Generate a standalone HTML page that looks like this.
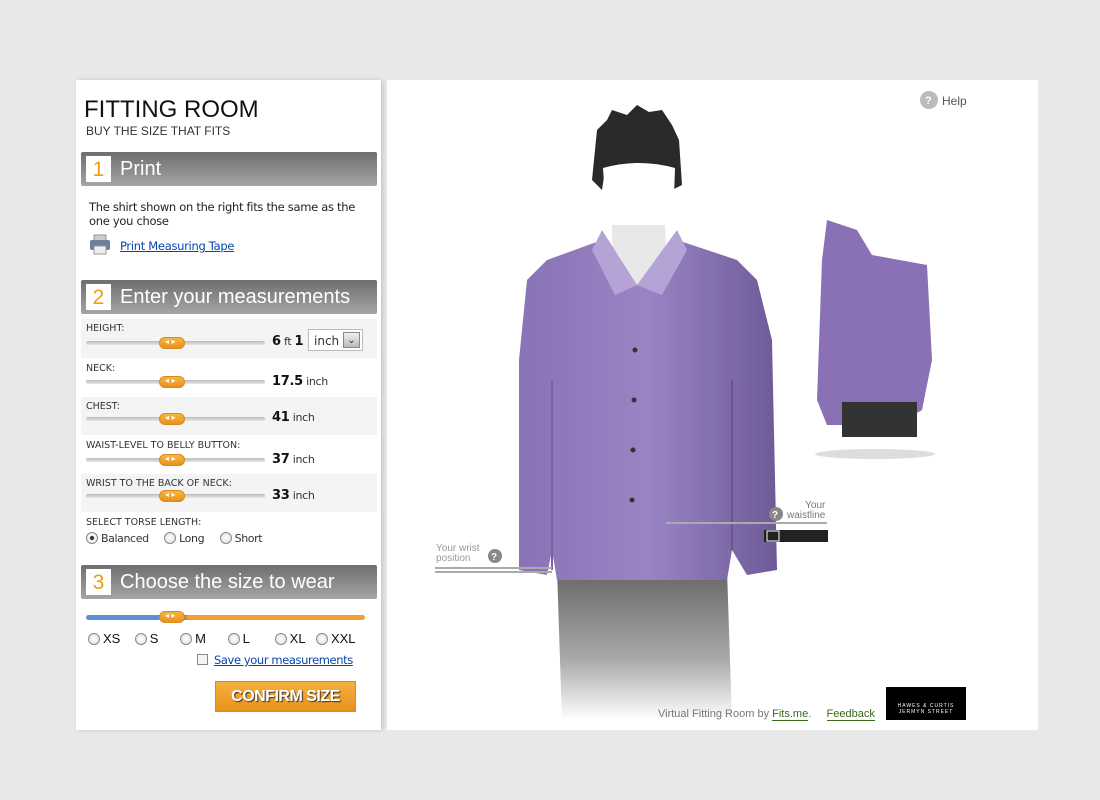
<!DOCTYPE html>
<html><head><style>
*{margin:0;padding:0;box-sizing:border-box}
body{width:1100px;height:800px;background:#e8e8e8;font-family:"Liberation Sans",sans-serif;position:relative;overflow:hidden}
.abs{position:absolute}
#left{left:76px;top:80px;width:305px;height:650px;background:#fff;box-shadow:2px 0 4px rgba(0,0,0,.15)}
#right{left:387px;top:80px;width:651px;height:650px;background:#fff}
.hdr{position:absolute;left:5px;width:296px;height:34px;background:linear-gradient(#6e6e6e,#a5a5a5);border-radius:2px;color:#fff;font-size:20px;line-height:34px}
.hdr .n{position:absolute;left:5px;top:4px;width:25px;height:26px;background:#fff;color:#f39c12;font-size:21px;text-align:center;line-height:27px}
.hdr .t{position:absolute;left:39px;top:0}
.row{position:absolute;left:5px;width:296px;font-size:10px;color:#333;font-family:"DejaVu Sans",sans-serif}
.row .l{position:absolute;left:5px;top:4px;font-size:9.5px}
.track{position:absolute;left:5px;width:179px;height:4px;background:linear-gradient(#bbb,#e6e6e6);border-radius:2px}
.knob{position:absolute;width:26px;height:12px;border-radius:6px;background:linear-gradient(#f8b540,#e8921c);border:1px solid #d88a20}
.knob:after{content:"◂ ▸";position:absolute;left:5px;top:-1px;font-size:8px;color:#fff}
.val{position:absolute;left:191px;font-size:11px;color:#333;letter-spacing:-0.3px}
.val b{font-size:13px;color:#111}
.rad{display:inline-block;width:12px;height:12px;border-radius:50%;border:1px solid #888;background:radial-gradient(#fff,#ddd);vertical-align:-2px;margin-right:3px}
a{color:#0645ad;text-decoration:underline}
</style></head><body>
<div id="left" class="abs">
 <div class="abs" style="left:8px;top:16px;font-size:24px;color:#111">FITTING ROOM</div>
 <div class="abs" style="left:10px;top:44px;font-size:12px;color:#333">BUY THE SIZE THAT FITS</div>
 <div class="hdr" style="top:72px"><div class="n">1</div><div class="t">Print</div></div>
 <div class="abs" style="left:13px;top:120px;font-size:11.5px;color:#222;width:278px;line-height:14px;font-family:'DejaVu Sans',sans-serif;letter-spacing:-0.3px">The shirt shown on the right fits the same as the one you chose</div>
 <svg class="abs" style="left:13px;top:154px" width="22" height="22"><rect x="5" y="1" width="12" height="6" fill="#ccc" stroke="#999"/><rect x="1" y="6" width="20" height="10" rx="2" fill="#6a7f99"/><rect x="5" y="12" width="12" height="8" fill="#eee" stroke="#999"/></svg>
 <a class="abs" style="left:44px;top:159px;font-size:11.5px;font-family:'DejaVu Sans',sans-serif;letter-spacing:-0.3px">Print Measuring Tape</a>
 <div class="hdr" style="top:200px"><div class="n">2</div><div class="t">Enter your measurements</div></div>
 <div class="row" style="top:239px;height:39px;background:#f4f4f4"><div class="l">HEIGHT:</div><div class="track" style="top:22px"></div><div class="knob" style="left:78px;top:18px"></div><div class="val" style="top:15px"><b>6</b> ft <b>1</b></div>
  <div class="abs" style="left:227px;top:10px;width:55px;height:22px;border:1px solid #bbb;background:#fff;font-size:12px;padding:4px 0 0 5px">inch<span class="abs" style="left:34px;top:2px;width:17px;height:16px;border:1px solid #888;background:linear-gradient(#eee,#bbb);font-size:10px;text-align:center;line-height:15px">⌄</span></div></div>
 <div class="row" style="top:279px;height:38px"><div class="l">NECK:</div><div class="track" style="top:21px"></div><div class="knob" style="left:78px;top:17px"></div><div class="val" style="top:15px"><b>17.5</b> inch</div></div>
 <div class="row" style="top:317px;height:38px;background:#f4f4f4"><div class="l">CHEST:</div><div class="track" style="top:20px"></div><div class="knob" style="left:78px;top:16px"></div><div class="val" style="top:13px"><b>41</b> inch</div></div>
 <div class="row" style="top:356px;height:38px"><div class="l">WAIST-LEVEL TO BELLY BUTTON:</div><div class="track" style="top:22px"></div><div class="knob" style="left:78px;top:18px"></div><div class="val" style="top:16px"><b>37</b> inch</div></div>
 <div class="row" style="top:394px;height:38px;background:#f4f4f4"><div class="l">WRIST TO THE BACK OF NECK:</div><div class="track" style="top:20px"></div><div class="knob" style="left:78px;top:16px"></div><div class="val" style="top:14px"><b>33</b> inch</div></div>
 <div class="abs" style="left:10px;top:437px;font-size:9.5px;color:#333;font-family:'DejaVu Sans',sans-serif">SELECT TORSE LENGTH:</div>
 <div class="abs" style="left:10px;top:452px;font-size:11px;color:#333;font-family:'DejaVu Sans',sans-serif;letter-spacing:-0.4px"><span class="rad" style="background:radial-gradient(#333 25%,#fff 35%,#ddd)"></span>Balanced &nbsp;&nbsp;&nbsp;&nbsp;<span class="rad"></span>Long &nbsp;&nbsp;&nbsp;&nbsp;<span class="rad"></span>Short</div>
 <div class="hdr" style="top:485px"><div class="n">3</div><div class="t">Choose the size to wear</div></div>
 <div class="abs" style="left:10px;top:535px;width:110px;height:5px;background:#5a8fd8;border-radius:3px"></div>
 <div class="abs" style="left:110px;top:535px;width:179px;height:5px;background:#f0a030;border-radius:3px"></div>
 <div class="knob abs" style="left:83px;top:531px"></div>
 <div class="abs" style="left:12px;top:551px;font-size:13px;color:#111;white-space:pre"><span class="rad"></span>XS    <span class="rad"></span>S      <span class="rad"></span>M      <span class="rad"></span>L       <span class="rad"></span>XL   <span class="rad"></span>XXL</div>
 <span class="abs" style="left:121px;top:574px;width:11px;height:11px;border:1px solid #888;background:#f4f4f4"></span>
 <a class="abs" style="left:138px;top:573px;font-size:11.5px;font-family:'DejaVu Sans',sans-serif;letter-spacing:-0.4px">Save your measurements</a>
 <div class="abs" style="left:139px;top:601px;width:141px;height:31px;background:linear-gradient(#f5b040,#e8921c);border:1px solid #d98a1e;color:#fff;font-weight:bold;font-size:16px;text-align:center;line-height:29px;text-shadow:1px 1px 1px #333;letter-spacing:-0.5px">CONFIRM SIZE</div>
</div>
<div id="right" class="abs">
 <svg class="abs" style="left:0;top:0" width="651" height="650">
  <defs><linearGradient id="j" x1="0" y1="0" x2="0" y2="1"><stop offset="0" stop-color="#666"/><stop offset=".6" stop-color="#aaa"/><stop offset="1" stop-color="#fff"/></linearGradient>
  <linearGradient id="s" x1="0" x2="1"><stop offset="0" stop-color="#8a73b5"/><stop offset=".5" stop-color="#9a84c4"/><stop offset="1" stop-color="#6f5a98"/></linearGradient></defs>
  <path d="M170 490 L340 490 L345 640 L175 640Z" fill="url(#j)"/>
  <path d="M205 100 L210 50 L220 40 L225 30 L240 35 L250 25 L262 32 L275 30 L285 45 L292 60 L295 105 L285 110 L285 90 L218 90 L215 110Z" fill="#2a2a2a"/>
  <path d="M216 88 Q252 78 288 88 L286 145 Q252 175 220 145Z" fill="#fff"/>
  <path d="M225 145 L278 145 L280 185 L250 205 L225 185Z" fill="#e8e8e8"/>
  <path d="M215 160 L250 205 L290 160 L350 180 L370 200 L385 260 L390 490 L360 495 L345 470 L340 500 L170 500 L165 470 L160 495 L132 490 L132 280 L140 200 L160 180Z" fill="url(#s)"/>
  <path d="M215 150 L250 205 L228 215 L205 170Z M290 150 L250 205 L275 215 L300 170Z" fill="#b5a3d6"/>
  <line x1="165" y1="300" x2="165" y2="490" stroke="#7a62a3" stroke-width="2"/>
  <line x1="345" y1="300" x2="345" y2="470" stroke="#6a5590" stroke-width="2"/>
  <circle cx="248" cy="270" r="2.5" fill="#333"/><circle cx="247" cy="320" r="2.5" fill="#333"/><circle cx="246" cy="370" r="2.5" fill="#333"/><circle cx="245" cy="420" r="2.5" fill="#333"/>
  <path d="M440 140 L470 150 L485 175 L540 185 L545 280 L535 330 L510 345 L440 345 L430 320 L435 180Z" fill="#8a70b5"/>
  <rect x="455" y="322" width="75" height="35" fill="#333"/>
  <ellipse cx="488" cy="374" rx="60" ry="5" fill="#ddd"/>
  <line x1="279" y1="443" x2="440" y2="443" stroke="#aaa" stroke-width="2"/>
  <line x1="48" y1="488" x2="165" y2="488" stroke="#aaa" stroke-width="2"/>
  <line x1="48" y1="492" x2="165" y2="492" stroke="#aaa" stroke-width="2"/>
  <circle cx="389" cy="434" r="7" fill="#888"/><text x="385" y="438" font-size="10" fill="#fff" font-family="Liberation Sans" font-weight="bold">?</text>
  <circle cx="108" cy="476" r="7" fill="#888"/><text x="104" y="480" font-size="10" fill="#fff" font-family="Liberation Sans" font-weight="bold">?</text>
  <rect x="377" y="450" width="64" height="12" fill="#222"/><rect x="380" y="451" width="12" height="10" fill="none" stroke="#fff"/>
  <circle cx="542" cy="20" r="9" fill="#bbb"/><text x="538" y="24" font-size="11" fill="#fff" font-family="Liberation Sans" font-weight="bold">?</text>
 </svg>
 <div class="abs" style="left:555px;top:14px;font-size:12px;color:#555">Help</div>
 <div class="abs" style="left:400px;top:421px;font-size:10px;color:#777;text-align:right;line-height:10px">Your<br>waistline</div>
 <div class="abs" style="left:49px;top:464px;font-size:10px;color:#999;line-height:10px">Your wrist<br>position</div>
 <div class="abs" style="left:271px;top:628px;font-size:11px;color:#777">Virtual Fitting Room by <span style="color:#3a6a1a;border-bottom:1px solid #3a6a1a">Fits.me</span>. &nbsp;&nbsp;&nbsp;&nbsp;<span style="color:#3a6a1a;border-bottom:1px solid #3a6a1a">Feedback</span></div>
 <div class="abs" style="left:499px;top:607px;width:80px;height:33px;background:#000;color:#fff;font-size:5px;text-align:center;padding-top:16px;letter-spacing:1px">HAWES &amp; CURTIS<br>JERMYN STREET</div>
</div>
</body></html>
